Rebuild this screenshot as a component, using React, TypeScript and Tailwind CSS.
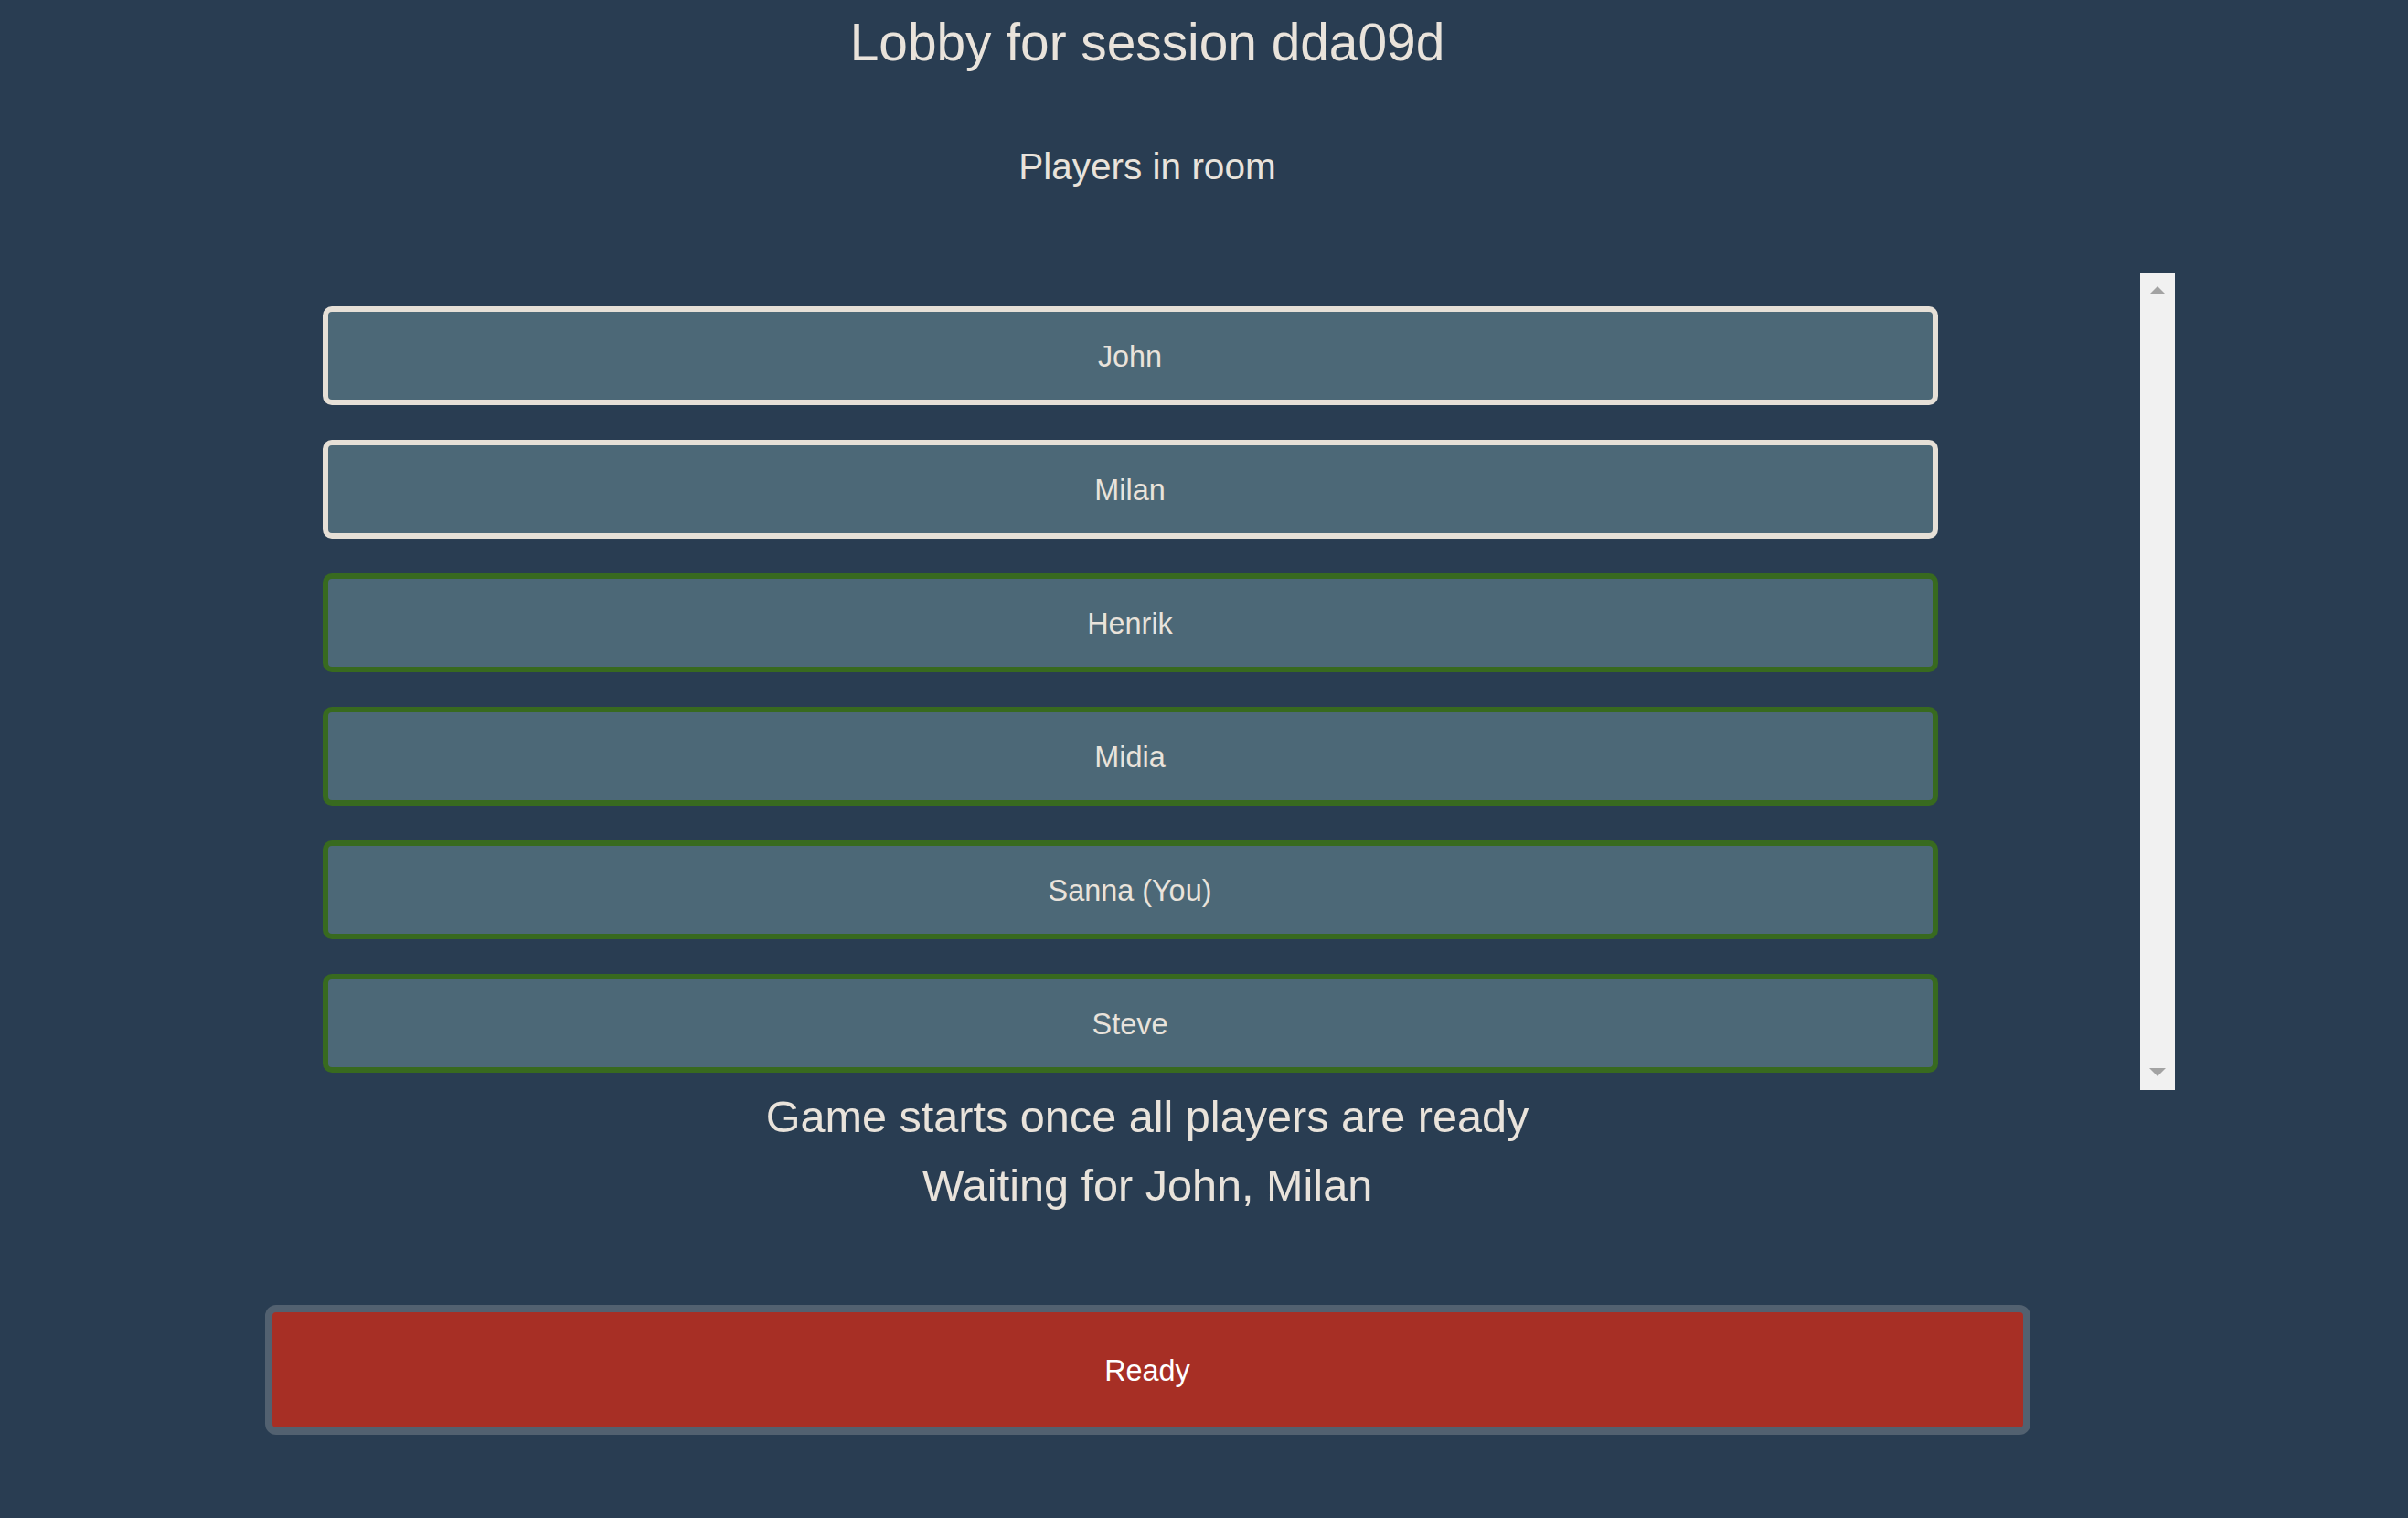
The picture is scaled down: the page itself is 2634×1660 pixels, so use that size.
import React from "react";

type Player = { name: string; ready: boolean };

const players: Player[] = [
  { name: "John", ready: false },
  { name: "Milan", ready: false },
  { name: "Henrik", ready: true },
  { name: "Midia", ready: true },
  { name: "Sanna (You)", ready: true },
  { name: "Steve", ready: true },
];

function PlayerCard({ player }: { player: Player }) {
  return (
    <div
      className={`w-[1767px] h-[108px] shrink-0 rounded-[10px] border-[6px] bg-[#4c6877] flex items-center justify-center pt-[2px] text-[32.4px] leading-none text-[#e9e3db] ${
        player.ready ? "border-[#386a1f]" : "border-[#e6e0d7]"
      }`}
    >
      {player.name}
    </div>
  );
}

function Scrollbar() {
  return (
    <div className="w-[38px] h-full bg-[#f1f1f1] flex flex-col items-center justify-between pt-[15px] pb-[15px]">
      <svg width="18" height="9" viewBox="0 0 18 9">
        <polygon points="9,0 18,9 0,9" fill="#a3a3a3" />
      </svg>
      <svg width="18" height="9" viewBox="0 0 18 9">
        <polygon points="0,0 18,0 9,9" fill="#a3a3a3" />
      </svg>
    </div>
  );
}

export default function App() {
  const waiting = players.filter((p) => !p.ready).map((p) => p.name);

  return (
    <div
      className="min-h-screen w-full bg-[#293d52] text-[#e9e3db]"
      style={{ fontFamily: '"Liberation Sans", Arial, sans-serif' }}
    >
      <div className="w-[2510px] flex flex-col items-center">
        <h1 className="mt-[19px] text-[56.8px] leading-none">Lobby for session dda09d</h1>
        <h2 className="mt-[86px] text-[40.5px] leading-none">Players in room</h2>

        <div className="mt-[96px] w-[2248px] h-[894px] flex">
          <div className="flex-1 h-full overflow-hidden flex flex-col items-center gap-[38px] pt-[37px]">
            {players.map((p) => (
              <PlayerCard key={p.name} player={p} />
            ))}
          </div>
          <Scrollbar />
        </div>

        <p className="mt-[5px] text-[48.6px] leading-none">Game starts once all players are ready</p>
        <p className="mt-[26px] text-[48.6px] leading-none">Waiting for {waiting.join(", ")}</p>

        <button className="mt-[107px] w-[1931px] h-[142px] rounded-[12px] border-[8px] border-[#526170] bg-[#a72f25] pt-[2px] text-white text-[32.4px] leading-none">
          Ready
        </button>
      </div>
    </div>
  );
}
